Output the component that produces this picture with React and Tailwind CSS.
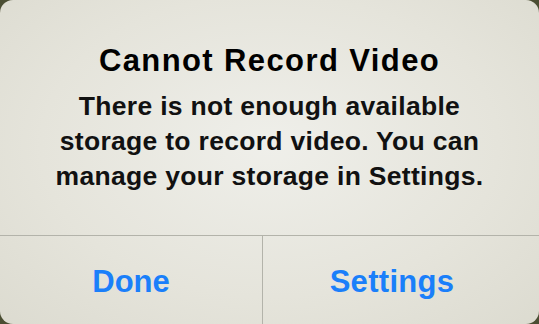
export default function App() {
  return (
    <div className="w-[539px] h-[324px] overflow-hidden bg-[#4b4e33]">
      <div
        className="w-[539px] h-[324px] rounded-[13px] overflow-hidden flex flex-col bg-[radial-gradient(ellipse_at_50%_45%,#efefea_0%,#e5e4db_60%,#dcdbd0_100%)]"
        style={{ fontFamily: '"Liberation Sans", Arial, sans-serif' }}
      >
        <div className="h-[235px] flex flex-col items-center pt-[43px] text-black">
          <p className="text-[31px] leading-[36px] font-bold tracking-[1.4px]">
            Cannot Record Video
          </p>
          <p className="mt-[10px] text-[26.5px] leading-[35px] font-bold tracking-[0.3px] text-center text-[#111]">
            There is not enough available
            <br />
            storage to record video. You can
            <br />
            manage your storage in Settings.
          </p>
        </div>
        <div className="h-px bg-[#b3b3aa]" />
        <div className="flex flex-1">
          <div className="w-[262px] flex justify-center pt-[28px]">
            <span className="text-[31px] leading-[36px] font-bold text-[#1a7ffa]">
              Done
            </span>
          </div>
          <div className="w-px bg-[#b3b3aa]" />
          <div className="flex-1 flex justify-center pt-[28px] pr-[18px]">
            <span className="text-[31px] leading-[36px] font-bold tracking-[0.3px] text-[#1a7ffa]">
              Settings
            </span>
          </div>
        </div>
      </div>
    </div>
  );
}
